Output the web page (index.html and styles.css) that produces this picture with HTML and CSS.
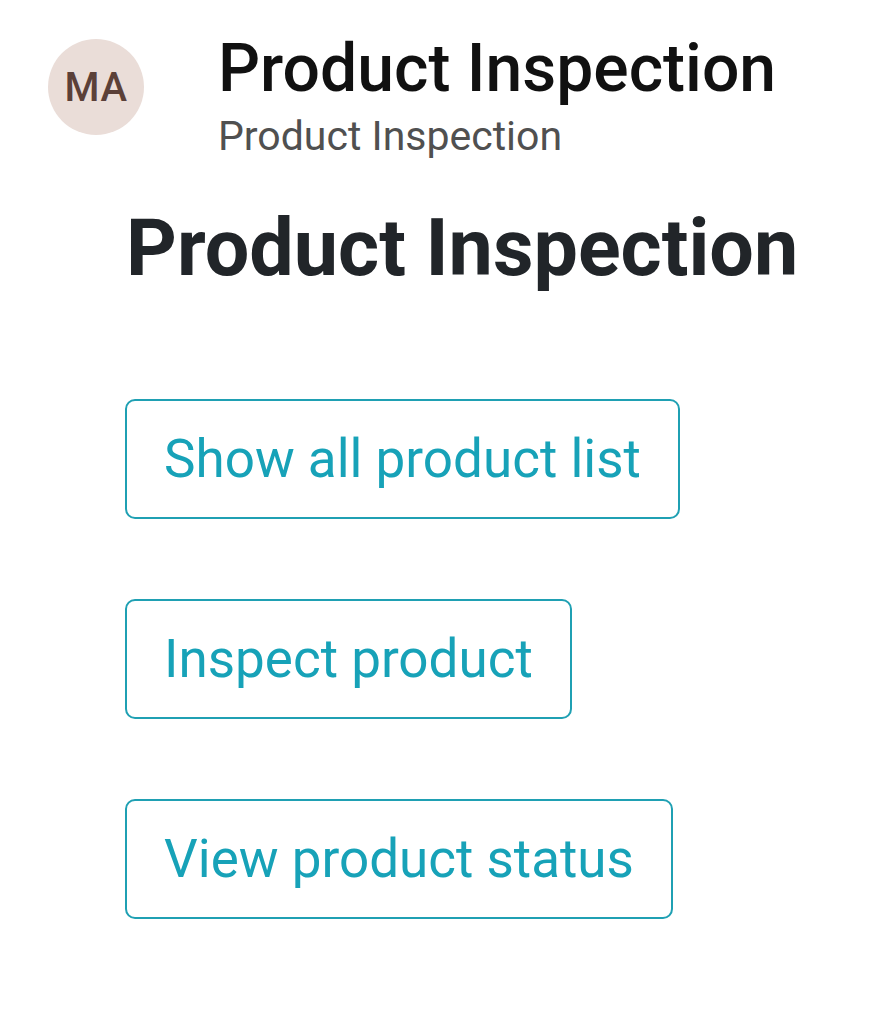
FILE: index.html
```html
<!DOCTYPE html>
<html>
<head>
<meta charset="utf-8">
<link rel="stylesheet" href="styles.css">
</head>
<body>
<header class="topbar">
  <div class="avatar">MA</div>
  <div class="titles">
    <div class="app-title">Product Inspection</div>
    <div class="app-sub">Product Inspection</div>
  </div>
</header>
<main class="content">
  <h1 class="heading">Product Inspection</h1>
  <div class="actions">
    <button class="btn">Show all product list</button>
    <button class="btn">Inspect product</button>
    <button class="btn">View product status</button>
  </div>
</main>
</body>
</html>
```
FILE: styles.css
```css
html, body {
  margin: 0;
  padding: 0;
  background: #ffffff;
  font-family: Roboto, "Liberation Sans", sans-serif;
}
.topbar {
  display: flex;
  align-items: flex-start;
  padding: 39px 0 0 48px;
  gap: 74px;
}
.avatar {
  width: 96px;
  height: 96px;
  border-radius: 50%;
  background: #eaddd8;
  color: #5b4038;
  font-size: 40px;
  font-weight: 500;
  display: flex;
  align-items: center;
  justify-content: center;
  letter-spacing: 0.5px;
  flex-shrink: 0;
}
.titles {
  display: flex;
  flex-direction: column;
}
.app-title {
  font-size: 66px;
  font-weight: 500;
  color: #111;
  line-height: 60px;
  margin-top: 0;
}
.app-sub {
  font-size: 41px;
  color: #505050;
  line-height: 56px;
  margin-top: 9px;
}
.content {
  padding: 0 0 0 126px;
}
.heading {
  margin: 36px 0 0 0;
  font-size: 79px;
  font-weight: 700;
  color: #212529;
  line-height: 96px;
}
.actions {
  display: flex;
  flex-direction: column;
  align-items: flex-start;
  gap: 80px;
  margin-top: 103px;
}
.btn {
  font-family: Roboto, "Liberation Sans", sans-serif;
  font-size: 53px;
  color: #17a2b8;
  background: #fff;
  border: 2px solid #1fa0b3;
  border-radius: 10px;
  height: 120px;
  padding: 0 37px;
  line-height: 1;
  margin-left: -1px;
}
```
